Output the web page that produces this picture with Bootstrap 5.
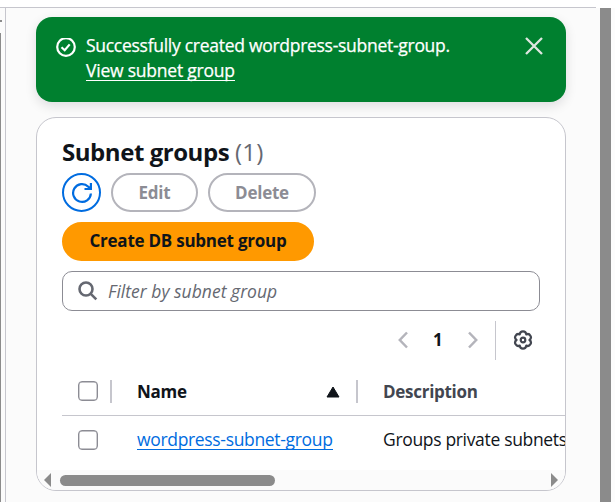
<!DOCTYPE html>
<html lang="en">
<head>
<meta charset="utf-8">
<meta name="viewport" content="width=device-width, initial-scale=1">
<title>Subnet groups</title>
<link href="https://cdn.jsdelivr.net/npm/bootstrap@5.3.0/dist/css/bootstrap.min.css" rel="stylesheet">
<style>
body{font-family:"Open Sans","Noto Sans",sans-serif;font-size:17.5px;letter-spacing:-.28px;line-height:25px;color:#0f141a;background:#fff;height:502px}
svg{display:block;flex:none}
.topbar{height:8px;border-bottom:1px solid #c6c6cd;width:596px;background:#fff}
.body-row{height:494px}
.rail{width:6px;border-right:1px solid #c6c6cd;background:#fbfbfb;padding-top:12px}
.rail-tip{width:2px;height:2px;background:#8b8b8b}
.rail-thumb{width:1px;height:469px;margin-top:11px;background:#8b8b8b}
.content{width:594px;background:#fbfbfb;padding:9px 34px 0 30px}
.page-thumb{width:11px;background:#8b8b8b}
.page-edge{width:4px;background:#fcfcfc}
.flash{height:85px;border-radius:16px;background:#00802f;color:#fff;padding:16px 23px 0 20px;margin-bottom:15px;border:0;box-shadow:0 4px 12px rgba(0,7,22,.12);-webkit-text-stroke:.25px #fff}
.flash a{color:#fff;text-decoration:none;border-bottom:1px solid #fff;line-height:20px;display:inline-block;letter-spacing:-.22px}
.panel{height:374px;border:1px solid #c6c6cd;border-radius:20px;overflow:hidden;background:#fff}
.panel-top{padding:19px 25px 0}
.title{font-size:24px;letter-spacing:-.45px;line-height:30px;font-weight:700;margin:0 0 6px;white-space:nowrap}
.count{font-weight:400;color:#656871;letter-spacing:.2px}
.pill{height:39px;border-radius:20px;border:2px solid #b4b4bb;color:#8c8c94;font-weight:700;font-size:17px;line-height:32px;padding:0;text-align:center;background:#fff;letter-spacing:-.24px}
.pill-refresh{width:39px;border-color:#006ce0;color:#006ce0}
.pill-edit{width:87px}.pill-delete{width:108px}
.pill-main{width:252px;background:#ff9900;border-color:#ff9900;color:#0f141a;margin-top:10px;display:block;padding-bottom:2px}
.pills{gap:10px}
.search{height:40px;margin-top:10px;border:1px solid #8c8c94;border-radius:10px;padding-left:15px;gap:10px;font-style:italic;color:#656871;letter-spacing:.02px}
.pager{height:39px;margin-top:10px;justify-content:flex-end}
.pager svg,.pager b{margin-bottom:2px}
.pager b{font-size:17px;width:10px;margin-left:25px;margin-right:25px}
.pager-rule{width:1px;height:39px;background:#c6c6cd;margin-left:17px;margin-right:17px}
.gear{margin-right:7px}
.grid-row{white-space:nowrap;margin-left:25px;padding-left:16px}
.grid-head{height:57px;padding-top:7px;border-bottom:1px solid #c6c6cd;font-weight:700;font-size:17px}
.grid-line{height:55px;padding-bottom:6px;letter-spacing:-.33px}
.box{width:20px;height:20px;border:1px solid #8c8c94;border-radius:4px;flex:none;box-shadow:inset 0 0 0 .4px #8c8c94}
.split{width:2px;height:23px;background:#c6c6cd;flex:none}
.lead-split{margin:0 25px 0 12px}
.name-cell{width:221px;margin-right:25px;flex:none}
.grid-line .name-cell{margin-left:39px}
.grid-line .name-cell,.desc{margin-top:-1px}
.desc-head{color:#424650}
.sorter{margin-right:16px;margin-top:2px}
.name-cell a{color:#006ce0;text-decoration:none;border-bottom:1px solid #006ce0;line-height:20px;display:inline-block}
.hscroll{height:20px;background:#fbfbfb;padding:0 7px}
.hthumb{width:215px;height:11px;border-radius:6px;background:#8b8b8b;margin-left:9px}
.ok{margin:5px 10px 0 0}
.closer{margin-top:4px}
</style>
<script src="https://cdn.jsdelivr.net/npm/bootstrap@5.3.0/dist/js/bootstrap.bundle.min.js"></script>
</head>
<body class="overflow-hidden">
<div class="topbar"></div>
<div class="body-row d-flex">
  <div class="rail"><div class="rail-tip"></div><div class="rail-thumb"></div></div>
  <main class="content">
    <div class="flash alert d-flex" role="alert">
      <svg class="ok" width="20" height="25" viewBox="0 0 20 25" fill="none" stroke="#fff" stroke-width="2.2"><circle cx="10" cy="9" r="8.8"/><path d="M5.500 9.200 8.700 12.200l5-5.800"/></svg>
      <div class="flex-grow-1">
        <div>Successfully created wordpress-subnet-group.</div>
        <a href="#">View subnet group</a>
      </div>
      <svg class="closer" width="18" height="18" viewBox="0 0 18 18" stroke="#dfe6e1" stroke-width="2.3"><path d="m1 1 16 16M17 1 1 17"/></svg>
    </div>
    <section class="panel d-flex flex-column">
      <div class="panel-top">
        <h2 class="title">Subnet groups <span class="count">(1)</span></h2>
        <div class="d-flex pills">
          <button class="btn pill pill-refresh d-flex align-items-center justify-content-center" aria-label="Refresh"><svg width="22" height="22" viewBox="0 0 22 22" fill="none" stroke="currentColor" stroke-width="2.2"><path d="M19.900 11.500A8.900 8.900 0 1 1 17.300 4.700L19.500 6.500"/><path d="M19.900 1v6h-6.400"/></svg></button>
          <button class="btn pill pill-edit">Edit</button>
          <button class="btn pill pill-delete">Delete</button>
        </div>
        <button class="btn pill pill-main">Create DB subnet group</button>
        <div class="search d-flex align-items-center"><svg width="20" height="20" viewBox="0 0 20 20" fill="none" stroke="#656871" stroke-width="2.6"><circle cx="8" cy="8" r="6.500"/><path d="m12.800 12.800 5.500 5.500"/></svg><span>Filter by subnet group</span></div>
        <div class="pager d-flex align-items-center">
          <svg width="10" height="18" viewBox="0 0 10 18" fill="none" stroke="#b4b4bb" stroke-width="2.5"><path d="M9 1.500 1.800 9 9 16.500"/></svg>
          <b>1</b>
          <svg width="10" height="18" viewBox="0 0 10 18" fill="none" stroke="#b4b4bb" stroke-width="2.5"><path d="M1 1.500 8.200 9 1 16.500"/></svg>
          <div class="pager-rule"></div>
          <svg class="gear" width="20" height="20" viewBox="0 0 20 20" fill="none" stroke="#424650" stroke-width="2.2" stroke-linejoin="round"><path d="M16.500 10A3.270 3.270 0 0 1 13.250 15.630A3.270 3.270 0 0 1 6.750 15.630A3.270 3.270 0 0 1 3.500 10A3.270 3.270 0 0 1 6.750 4.370A3.270 3.270 0 0 1 13.250 4.370A3.270 3.270 0 0 1 16.500 10Z"/><circle cx="10" cy="10" r="2.300"/></svg>
        </div>
      </div>
      <div class="grid-row grid-head d-flex align-items-center">
        <div class="box"></div><div class="split lead-split"></div>
        <div class="name-cell d-flex align-items-center"><span>Name</span><svg class="ms-auto sorter" width="14" height="12" viewBox="0 0 14 12"><path d="M7 1 13 11H1z" fill="#0f141a" stroke="#0f141a" stroke-linejoin="round"/></svg><div class="split"></div></div>
        <span class="desc-head">Description</span>
      </div>
      <div class="grid-row grid-line d-flex align-items-center">
        <div class="box"></div>
        <div class="name-cell"><a href="#">wordpress-subnet-group</a></div>
        <span class="desc">Groups private subnets</span>
      </div>
      <div class="hscroll d-flex align-items-center">
        <svg width="7" height="14" viewBox="0 0 7 14"><path d="M7 0v14L0 7z" fill="#8b8b8b"/></svg>
        <div class="hthumb"></div>
        <svg class="ms-auto" width="7" height="14" viewBox="0 0 7 14"><path d="M0 0v14l7-7z" fill="#8b8b8b"/></svg>
      </div>
    </section>
  </main>
  <div class="page-thumb"></div><div class="page-edge"></div>
</div>
</body>
</html>
